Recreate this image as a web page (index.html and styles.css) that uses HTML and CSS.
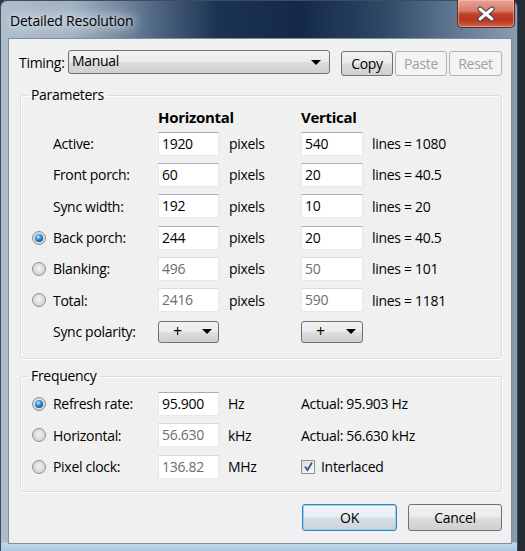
FILE: index.html
```html
<!DOCTYPE html>
<html>
<head>
<meta charset="utf-8">
<link rel="stylesheet" href="styles.css">
</head>
<body>
<div class="window">
  <div class="titlebar">
    <span class="title">Detailed Resolution</span>
    <div class="close">
      <svg width="20" height="16" viewBox="0 0 20 16">
        <path d="M4 3 L16 13 M16 3 L4 13" stroke="#3a3f4a" stroke-width="5" stroke-linecap="round"/>
        <path d="M4 3 L16 13 M16 3 L4 13" stroke="#ffffff" stroke-width="3" stroke-linecap="round"/>
      </svg>
    </div>
  </div>
  <div class="client">
    <div class="timing-row">
      <span class="timing-label">Timing:</span>
      <div class="combo combo-wide"><span>Manual</span><span class="arrow"></span></div>
      <button class="btn btn-copy">Copy</button>
      <button class="btn btn-paste" disabled>Paste</button>
      <button class="btn btn-reset" disabled>Reset</button>
    </div>

    <fieldset class="group group-params">
      <legend>Parameters</legend>
      <div class="pgrid">
        <span class="hdr hdr-h">Horizontal</span>
        <span class="hdr hdr-v">Vertical</span>

        <span class="cell-radio"></span><span class="lbl">Active:</span>
        <span class="inp">1920</span><span class="unit">pixels</span>
        <span class="inp">540</span><span class="lines">lines = 1080</span>

        <span class="cell-radio"></span><span class="lbl">Front porch:</span>
        <span class="inp">60</span><span class="unit">pixels</span>
        <span class="inp">20</span><span class="lines">lines = 40.5</span>

        <span class="cell-radio"></span><span class="lbl">Sync width:</span>
        <span class="inp">192</span><span class="unit">pixels</span>
        <span class="inp">10</span><span class="lines">lines = 20</span>

        <span class="cell-radio"><span class="radio checked"></span></span><span class="lbl">Back porch:</span>
        <span class="inp">244</span><span class="unit">pixels</span>
        <span class="inp">20</span><span class="lines">lines = 40.5</span>

        <span class="cell-radio"><span class="radio"></span></span><span class="lbl">Blanking:</span>
        <span class="inp dis">496</span><span class="unit">pixels</span>
        <span class="inp dis">50</span><span class="lines">lines = 101</span>

        <span class="cell-radio"><span class="radio"></span></span><span class="lbl">Total:</span>
        <span class="inp dis">2416</span><span class="unit">pixels</span>
        <span class="inp dis">590</span><span class="lines">lines = 1181</span>

        <span class="cell-radio"></span><span class="lbl">Sync polarity:</span>
        <div class="combo combo-small"><span class="plus">+</span><span class="arrow"></span></div><span></span>
        <div class="combo combo-small combo-v"><span class="plus">+</span><span class="arrow"></span></div><span></span>
      </div>
    </fieldset>

    <fieldset class="group group-freq">
      <legend>Frequency</legend>
      <div class="fgrid">
        <span class="cell-radio"><span class="radio checked"></span></span><span class="lbl">Refresh rate:</span>
        <span class="inp">95.900</span><span class="unit">Hz</span>
        <span class="actual">Actual: 95.903 Hz</span>

        <span class="cell-radio"><span class="radio"></span></span><span class="lbl">Horizontal:</span>
        <span class="inp dis">56.630</span><span class="unit">kHz</span>
        <span class="actual">Actual: 56.630 kHz</span>

        <span class="cell-radio"><span class="radio"></span></span><span class="lbl">Pixel clock:</span>
        <span class="inp dis">136.82</span><span class="unit">MHz</span>
        <span class="actual check-row">
          <span class="checkbox">
            <svg width="11" height="11" viewBox="0 0 11 11"><path d="M2 5.5 L4.5 9 L9 1.5" fill="none" stroke="#3d5596" stroke-width="1.8"/></svg>
          </span>Interlaced</span>
      </div>
    </fieldset>

    <div class="footer">
      <button class="btn btn-ok">OK</button>
      <button class="btn btn-cancel">Cancel</button>
    </div>
  </div>
</div>
</body>
</html>
```

FILE: styles.css
```css
* { box-sizing: border-box; }
html, body { margin: 0; height: 100%; }
body {
  background: linear-gradient(90deg, #2c3540 0, #2c3540 4px, #7a8694 4px, #7a8694 5px, #232b34 5px);
  font-family: "Open Sans", "Noto Sans", sans-serif;
  font-size: 14px;
  letter-spacing: -0.3px;
  color: #000;
  overflow: hidden;
}
.window {
  width: 518px;
  height: 551px;
  border: 1px solid #3e4d5e;
  border-bottom: none;
  border-radius: 7px 7px 0 0;
  background:
    linear-gradient(0deg, #a9c7e4 0, #c4d8ea 8px, rgba(0,0,0,0) 9px),
    linear-gradient(90deg, #aebccb 0%, #9fb0c2 14%, #4f6783 30%, #1b3352 42%, #14294a 58%, #2e4866 74%, #607892 88%, #8a9db1 100%);
  display: flex;
  flex-direction: column;
  padding: 0 5px 7px 7px;
}
.titlebar {
  height: 37px;
  display: flex;
  justify-content: space-between;
  align-items: flex-start;
}
.title {
  margin-top: 10px;
  margin-left: 2px;
  font-size: 14px;
  letter-spacing: -0.2px;
  color: #000;
  text-shadow: 0 0 6px #dfe7ef, 0 0 12px #dfe7ef, 0 0 18px #dfe7ef, 0 0 24px #d5dee8;
}
.close {
  width: 58px;
  height: 28px;
  margin-right: -3px;
  margin-top: -1px;
  border: 1px solid #5b2a23;
  border-top: none;
  border-radius: 0 0 5px 5px;
  background: linear-gradient(180deg, #e9a597 0%, #d77b68 40%, #c2412a 52%, #b93620 75%, #d0654c 100%);
  box-shadow: inset 0 0 0 1px rgba(255,200,190,0.5);
  display: flex;
  align-items: center;
  justify-content: center;
}
.client {
  flex: 1;
  background: #f0f0f0;
  border: 1px solid #7f90a4;
  padding: 11px 8px 0 11px;
  display: flex;
  flex-direction: column;
}
.timing-row {
  display: flex;
  align-items: flex-start;
  height: 26px;
}
.timing-label {
  flex: 0 0 49px;
  margin-left: -1px;
  margin-top: 3px;
}
.combo {
  height: 24px;
  border: 1px solid #707070;
  border-radius: 3px;
  background: linear-gradient(180deg, #f2f2f2 0%, #ebebeb 48%, #dddddd 52%, #cfcfcf 100%);
  display: flex;
  align-items: center;
  justify-content: space-between;
  padding: 0 8px 0 3px;
  line-height: 1;
}
.combo-wide { width: 262px; }
.combo-wide span:first-child { margin-top: -2px; }
.arrow {
  width: 0;
  height: 0;
  border-top: 5px solid #000;
  border-left: 5px solid transparent;
  border-right: 5px solid transparent;
}
.btn {
  font: inherit;
  letter-spacing: inherit;
  height: 25px;
  margin-top: 1px;
  border: 1px solid #707070;
  border-radius: 3px;
  background: linear-gradient(180deg, #f2f2f2 0%, #ebebeb 48%, #dddddd 52%, #cfcfcf 100%);
  color: #000;
  padding: 0;
  line-height: 1;
}
.btn:disabled {
  border-color: #adb2b5;
  background: #f4f4f4;
  color: #a0a0a0;
}
.btn-copy { width: 52px; margin-left: 11px; }
.btn-paste { width: 52px; margin-left: 2px; }
.btn-reset { width: 53px; margin-left: 2px; }

.group {
  margin: 0;
  border: 1px solid #d5dfe5;
  border-radius: 3px;
  box-shadow: inset 1px 1px 0 #fff, 1px 1px 0 #fff;
  width: 482px;
  padding: 0 0 11px 11px;
  min-width: 0;
}
.group legend {
  padding: 0 3px;
  margin-left: -4px;
  line-height: 18px;
}
.group-params { margin-top: 10px; }
.group-freq { margin-top: 8px; padding-bottom: 9px; }

.pgrid, .fgrid {
  display: grid;
  grid-template-columns: 21px 105px 61px 82px 62px 1fr;
  align-items: center;
}
.pgrid {
  margin-top: 2px;
  grid-template-rows: 22px repeat(7, 31.33px);
}
.fgrid {
  margin-top: 3px;
  grid-template-rows: repeat(3, 31.33px);
}
.hdr {
  font-weight: bold;
  font-size: 15px;
  white-space: nowrap;
}
.hdr-h { grid-column: 3 / span 2; }
.hdr-v { grid-column: 5 / span 2; }
.lbl { white-space: nowrap; }
.unit { padding-left: 10px; }
.fgrid .unit { padding-left: 9px; }
.lines { padding-left: 9px; white-space: nowrap; }
.actual { grid-column: 5 / span 2; white-space: nowrap; display: flex; align-items: center; }
.inp {
  height: 24px;
  background: #fff;
  border: 1px solid #e3e9ef;
  border-top-color: #abadb3;
  padding: 1px 3px 0;
  line-height: 20px;
}
.inp.dis { color: #6d6d6d; border-top-color: #d8dade; }
.cell-radio { display: flex; align-items: center; }
.radio {
  width: 14px;
  height: 14px;
  border-radius: 50%;
  border: 1px solid #8d8f91;
  background: radial-gradient(circle at 50% 45%, #f4f4f4 0%, #e2e2e2 40%, #c6c6c6 100%);
  display: flex;
  align-items: center;
  justify-content: center;
}
.radio.checked::after {
  content: "";
  width: 8px;
  height: 8px;
  border-radius: 50%;
  background: radial-gradient(circle at 40% 35%, #b9ecff 0%, #3c9ae6 35%, #0d4f9e 75%, #0a2f62 100%);
}
.combo-small {
  width: 61px;
  height: 22px;
  padding: 0 6px 0 14px;
}
.combo-v { width: 62px; }
.plus { font-size: 16px; margin-top: -2px; }
.checkbox {
  width: 14px;
  height: 14px;
  border: 1px solid #8e8f8f;
  background: linear-gradient(135deg, #dcdcdc, #fbfbfb);
  display: flex;
  align-items: center;
  justify-content: center;
  margin-right: 6px;
}
.footer {
  display: flex;
  justify-content: flex-end;
  margin-top: 12px;
  padding-right: 1px;
}
.btn-ok, .btn-cancel { height: 27px; margin-top: 0; }
.btn-ok {
  width: 95px;
  border-color: #3c7fb1;
  box-shadow: inset 0 0 0 1px #8fd3f6;
  background: linear-gradient(180deg, #f0f4f7 0%, #e8eef2 48%, #d8e0e6 52%, #cad3da 100%);
}
.btn-cancel { width: 94px; margin-left: 11px; }
```
